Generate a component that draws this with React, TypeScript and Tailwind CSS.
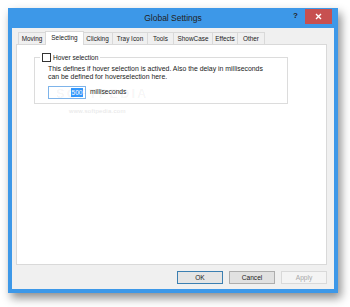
import React from "react";

const tabs = [
  { label: "Moving", w: 28 },
  { label: "Selecting", w: 37, active: true },
  { label: "Clicking", w: 31 },
  { label: "Tray Icon", w: 36 },
  { label: "Tools", w: 27 },
  { label: "ShowCase", w: 40 },
  { label: "Effects", w: 26 },
  { label: "Other", w: 28 },
];

export default function App() {
  return (
    <div
      className="w-[350px] h-[307px] bg-white pl-[8px] pt-[8px] text-[#1a1a1a]"
      style={{ fontFamily: '"Liberation Sans", Arial, sans-serif' }}
    >
      <div className="w-[330px] h-[285px] bg-[#3d98e8] flex flex-col shadow-[3px_5px_9px_rgba(0,0,0,0.45)]">
        {/* title bar */}
        <div className="h-[20px] flex items-start">
          <div className="w-[50px]" />
          <div className="flex-1 text-center text-[8.5px] leading-[20px] text-[#222]">Global Settings</div>
          <div className="w-[50px] flex items-start justify-end pr-[6px] pt-[1px]">
            <div className="text-[8px] font-bold leading-[14px] text-[#222] mr-[7px]">?</div>
            <div className="w-[27px] h-[15px] bg-[#c75050] flex items-center justify-center">
              <svg width="7" height="7" viewBox="0 0 7 7">
                <path d="M1 1L6 6M6 1L1 6" stroke="white" strokeWidth="1.4" />
              </svg>
            </div>
          </div>
        </div>
        {/* body */}
        <div className="flex-1 mx-[4px] mb-[4px] bg-[#f0f0f0] flex flex-col pt-[3px] pl-[4px] pr-[7px] pb-[5px]">
          <div className="flex items-end h-[13px] pl-[2px]">
            {tabs.map((t) =>
              t.active ? (
                <div
                  key={t.label}
                  style={{ width: t.w + 2 }}
                  className="relative z-10 h-[14px] -mb-px -mx-px bg-white border border-b-0 border-[#d9d9d9] text-[6.4px] leading-[12px] text-center"
                >
                  {t.label}
                </div>
              ) : (
                <div
                  key={t.label}
                  style={{ width: t.w }}
                  className="h-[12px] bg-[#f0f0f0] border border-b-0 border-[#d9d9d9] -ml-px first:ml-0 text-[6.4px] leading-[12px] text-center"
                >
                  {t.label}
                </div>
              )
            )}
          </div>
          <div className="relative flex-1 bg-white border border-[#d9d9d9] pt-[8px] pl-[17px]">
            <fieldset className="w-[254px] h-[51px] border border-[#dcdcdc] pl-[13px] pr-[4px]">
              <legend className="-ml-[8px] px-[2px] flex items-center text-[6.6px]">
                <span className="w-[9px] h-[9px] border border-[#333] bg-white mr-[2px]" />
                <span>Hover selection</span>
              </legend>
              <div className="text-[6.9px] leading-[8px] mt-[2px] whitespace-nowrap">
                This defines if hover selection is actived. Also the delay in milliseconds
                <br />
                can be defined for hoverselection here.
              </div>
              <div className="flex items-center mt-[5px]">
                <div className="w-[38px] h-[13px] border border-[#7eb4ea] bg-white flex items-center justify-end pr-[2px]">
                  <span className="bg-[#3399ff] text-white text-[6.6px] leading-[9px] px-[0.5px]">500</span>
                </div>
                <span className="ml-[4px] text-[6.7px]">milliseconds</span>
              </div>
            </fieldset>
            <div className="pl-[35px] pt-[3px] text-[6px] text-[#e6e6e6] tracking-[0.3px]">www.softpedia.com</div>
            <div className="absolute left-[39px] top-[42px] text-[13px] leading-[14px] font-bold tracking-[2px] text-[rgba(0,0,0,0.05)] pointer-events-none">
              SOFTPEDIA
            </div>
          </div>
          <div className="flex justify-end gap-[6px] mt-[6px] text-[6.6px]">
            <div className="w-[46px] h-[13px] bg-[#e5e5e5] border border-[#3c7fb1] flex items-center justify-center">OK</div>
            <div className="w-[46px] h-[13px] bg-[#e1e1e1] border border-[#adadad] flex items-center justify-center">Cancel</div>
            <div className="w-[46px] h-[13px] bg-[#f4f4f4] border border-[#d9d9d9] text-[#a8a8a8] flex items-center justify-center">Apply</div>
          </div>
        </div>
      </div>
    </div>
  );
}
